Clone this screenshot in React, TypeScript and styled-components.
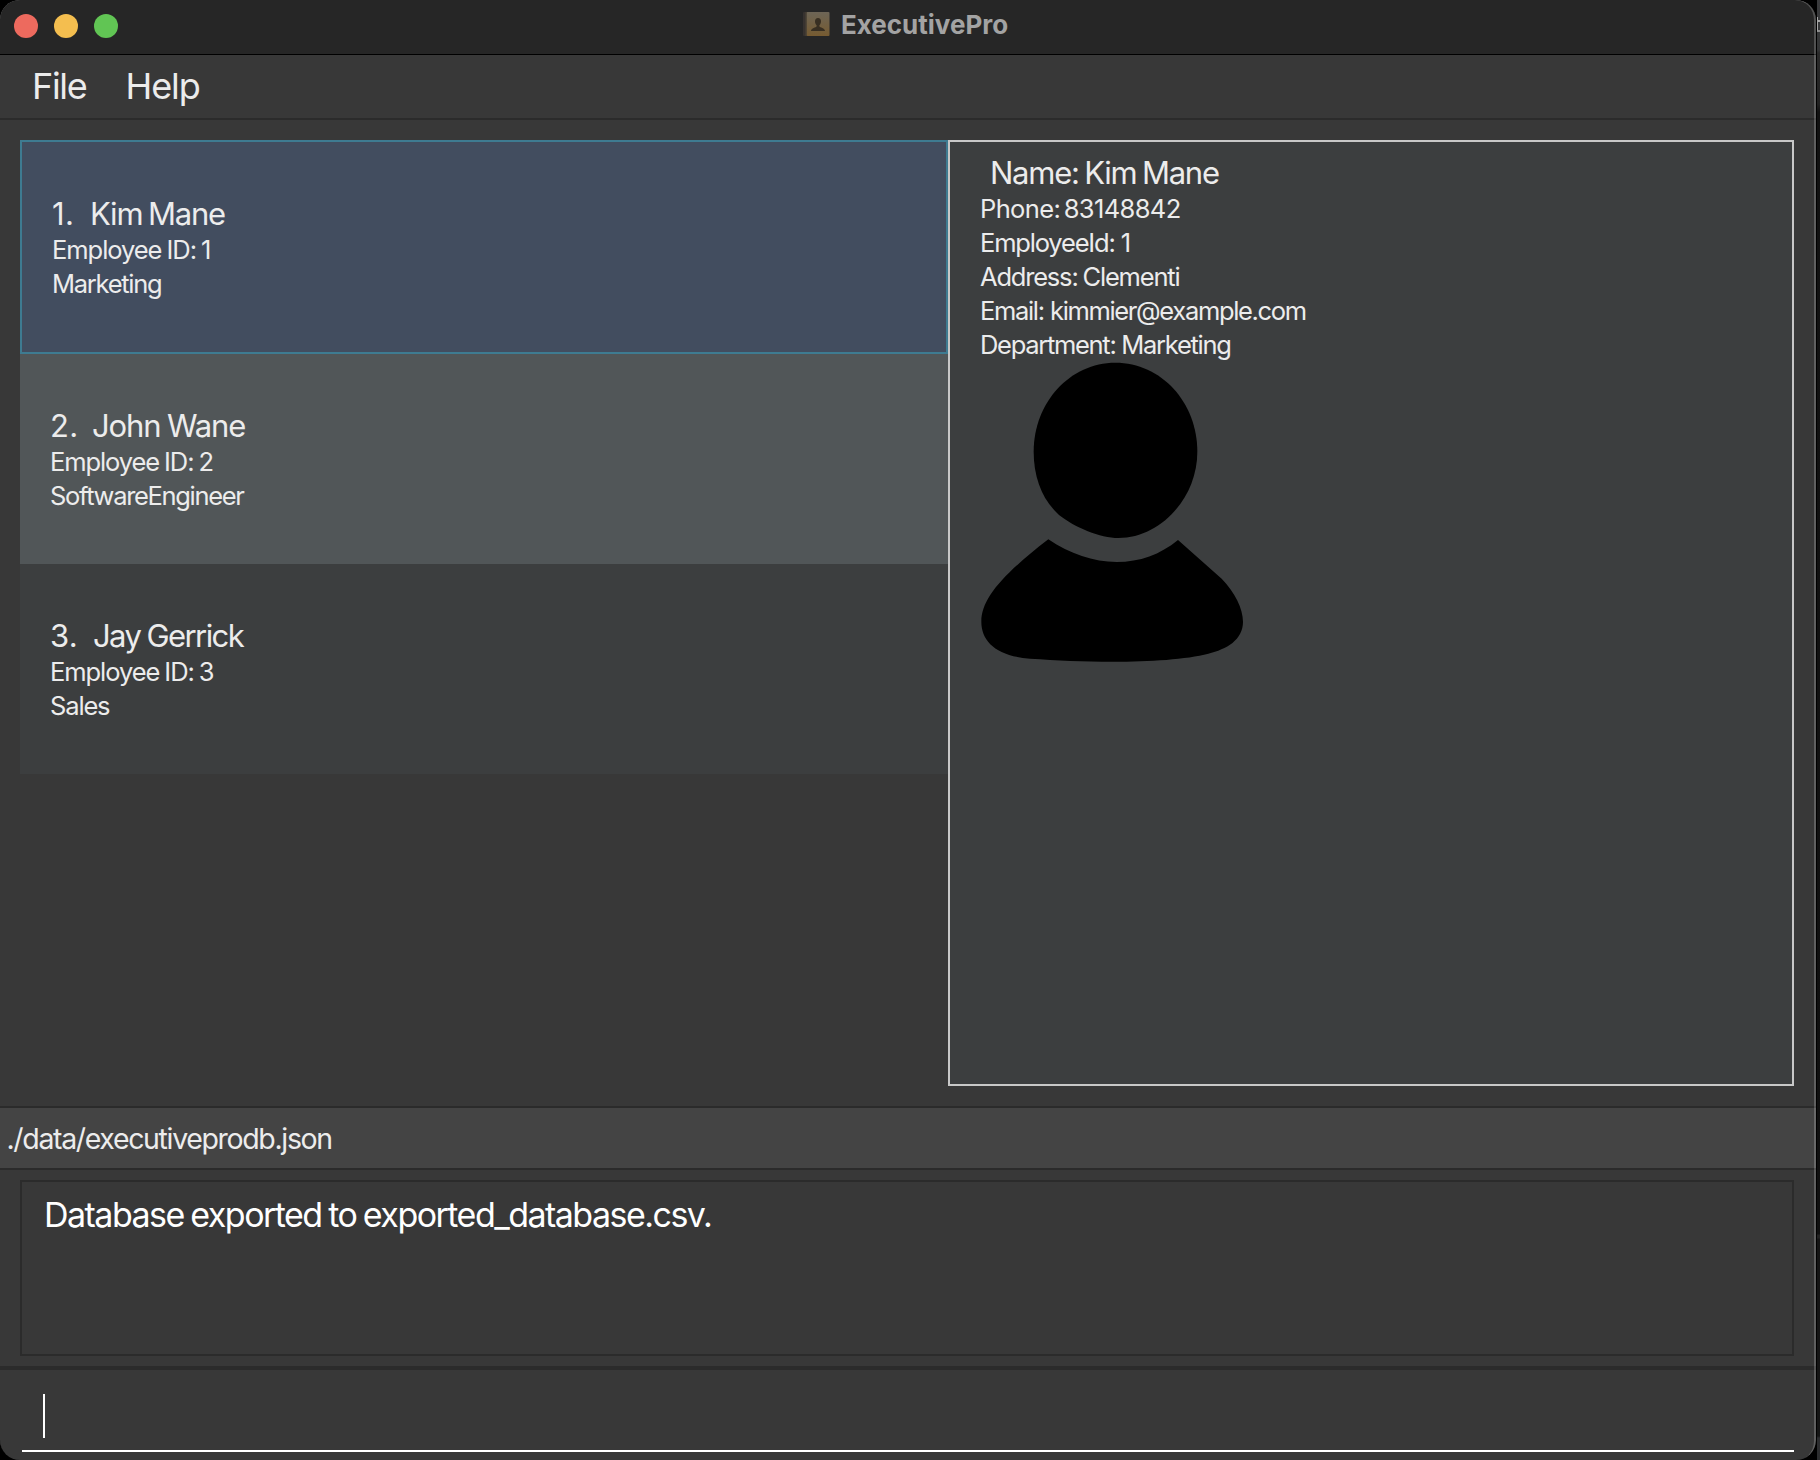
import React from "react";
import styled, { createGlobalStyle } from "styled-components";

const GlobalStyle = createGlobalStyle`
  * { box-sizing: border-box; }
  html, body { margin: 0; padding: 0; background: #000; }
  body { overflow: hidden; font-family: Inter, "Liberation Sans", sans-serif; }
`;

const Desktop = styled.div`
  display: flex;
  position: relative;
  width: 1820px;
  height: 1460px;
  overflow: hidden;
  background: #000;
`;

const Window = styled.main`
  display: flex;
  flex-direction: column;
  position: relative;
  flex: none;
  width: 1816px;
  height: 1460px;
  overflow: hidden;
  border-radius: 20px;
  background: #383838;
  color: #ececec;
`;

const WindowEdge = styled.div`
  position: absolute;
  inset: -1px 0 -2px -1px;
  border: 1px solid rgba(255, 255, 255, 0.28);
  border-right: 2px solid rgba(255, 255, 255, 0.2);
  border-radius: 21px;
  pointer-events: none;
`;

const Behind = styled.aside`
  display: flex;
  flex-direction: column;
  width: 3px;
  margin-left: 1px;
  padding-top: 17px;
  background: linear-gradient(
    #3a3b3d 0, #343536 50px, #2a2a2a 53px, #222 104px, #121212 112px,
    #101010 1234px, #222 1235px, #222 1238px, #151515 1239px, #151515 1436px, #2c2d2f 1438px
  );
`;

const BehindMark = styled.span`
  width: 3px;
  height: 15px;
  border-left: 1px solid #a5a5a5;
  border-bottom: 2px solid #8a8a8a;
  background: linear-gradient(transparent 3px, #a5a5a5 3px, #a5a5a5 5px, transparent 5px);
`;

const TitleBar = styled.header`
  display: flex;
  flex: none;
  position: relative;
  align-items: flex-start;
  justify-content: center;
  height: 55px;
  padding: 9px 5px 0 0;
  background: #262626;
  border-bottom: 1px solid #000;
`;

const Lights = styled.div`
  position: absolute;
  top: 14px;
  left: 14px;
  display: flex;
  gap: 16px;
`;

const Light = styled.span<{ $color: string }>`
  width: 24px;
  height: 24px;
  border-radius: 50%;
  background: ${(p) => p.$color};
`;

const Title = styled.h1`
  display: flex;
  gap: 10px;
  margin: 0;
  font-size: 26px;
  font-weight: 700;
  line-height: 31px;
  color: #a3a3a3;
`;

const BookIcon = styled.svg`
  width: 28px;
  height: 26px;
  margin-top: 2px;
`;

const MenuBar = styled.nav`
  display: flex;
  flex: none;
  height: 65px;
  padding: 9px 0 0 32px;
  border-bottom: 2px solid #2b2b2b;
`;

const MenuItem = styled.span<{ $width: number; $track: number }>`
  width: ${(p) => p.$width}px;
  font-size: 36px;
  line-height: 44px;
  letter-spacing: ${(p) => p.$track}px;
`;

const Content = styled.section`
  display: flex;
  flex: none;
  height: 986px;
  padding: 20px 22px 20px 20px;
`;

const List = styled.div`
  display: flex;
  flex-direction: column;
  width: 928px;
`;

const Card = styled.article<{ $bg: string; $selected?: boolean }>`
  display: flex;
  flex-direction: column;
  gap: 1px;
  height: ${(p) => (p.$selected ? 214 : 210)}px;
  padding: 53px 30px 0;
  background: ${(p) => p.$bg};
  border: ${(p) => (p.$selected ? "2px solid #3e7b91" : "0")};
`;

const Name = styled.div<{ $track: number; $word: number; $indent?: number }>`
  display: flex;
  padding-left: ${(p) => p.$indent ?? 0}px;
  font-size: 31px;
  line-height: 37px;
  letter-spacing: ${(p) => p.$track}px;
  word-spacing: ${(p) => p.$word}px;
  white-space: nowrap;
`;

const Index = styled.span<{ $width: number }>`
  width: ${(p) => p.$width}px;
  letter-spacing: 0.4px;
`;

const Field = styled.div<{ $track: number; $word?: number }>`
  font-size: 25.5px;
  line-height: 33px;
  letter-spacing: ${(p) => p.$track}px;
  word-spacing: ${(p) => p.$word ?? 0}px;
  white-space: nowrap;
`;

const Detail = styled.section`
  display: flex;
  flex-direction: column;
  gap: 1px;
  flex: 1;
  padding: 12px 30px;
  border: 2px solid #c8c8c8;
  background: #3c3e3f;
`;

const Avatar = styled.svg`
  display: block;
  width: 265px;
  height: 302px;
  margin-top: -1px;
`;

const StatusBar = styled.div`
  flex: none;
  height: 64px;
  padding: 13px 6.5px 0;
  border: solid #2b2b2b;
  border-width: 2px 0;
  background: #444;
  font-size: 28.5px;
  line-height: 35px;
  letter-spacing: -1.35px;
`;

const ResultArea = styled.section`
  flex: none;
  height: 200px;
  padding: 10px 22px 10px 20px;
  border-bottom: 4px solid #2b2b2b;
`;

const Result = styled.div`
  height: 176px;
  padding: 12px 22px;
  border: 2px solid #2b2b2b;
  color: #fff;
  font-size: 34px;
  line-height: 41px;
  letter-spacing: -1.53px;
  word-spacing: -1.5px;
`;

const CommandArea = styled.section`
  flex: 1;
  padding: 0 22px;
`;

const CommandInput = styled.div`
  height: 82px;
  padding: 24px 21px 0;
  border-bottom: 2px solid #fff;
`;

const Caret = styled.div`
  width: 2px;
  height: 44px;
  background: #fff;
`;

const employees = [
  { n: "1.", w: 38, name: "Kim Mane", nt: -1.2, nw: -2, id: "Employee ID: 1", it: -1.05, dept: "Marketing", dt: -1.28, bg: "#424d5f", selected: true },
  { n: "2.", w: 42, name: "John Wane", nt: -1.14, nw: -1, id: "Employee ID: 2", it: -1.1, dept: "SoftwareEngineer", dt: -1.33, bg: "#515658" },
  { n: "3.", w: 43, name: "Jay Gerrick", nt: -1.58, nw: -1, id: "Employee ID: 3", it: -1.07, dept: "Sales", dt: -1.15, bg: "#3c3e3f" },
];

const details: [string, number, number][] = [
  ["Phone: 83148842", -0.63, -3],
  ["EmployeeId: 1", -1.18, 0],
  ["Address: Clementi", -1.2, -1],
  ["Email: kimmier@example.com", -1.34, 0.5],
  ["Department: Marketing", -1.3, 0],
];

export default function App() {
  return (
    <>
      <GlobalStyle />
      <Desktop>
        <Window>
          <TitleBar>
            <Lights>
              <Light $color="#ed6a5e" />
              <Light $color="#f4be4f" />
              <Light $color="#61c554" />
            </Lights>
            <Title>
              <BookIcon viewBox="0 0 28 26">
                <defs>
                  <linearGradient id="cover" x1="0" y1="0" x2="0" y2="1">
                    <stop offset="0" stopColor="#6d6556" />
                    <stop offset="1" stopColor="#765b31" />
                  </linearGradient>
                </defs>
                <rect x="0" y="1" width="4" height="24" rx="1" fill="#37322f" />
                <rect x="3.500" y="1" width="23" height="24" rx="1" fill="url(#cover)" />
                <rect x="2.500" y="1" width="1.2" height="24" fill="#4e4537" />
                <path d="M15 7c-2 0-3 1.400-3 3.300 0 1.700.6 3 1.600 3.900v1.400c-.4 1-5.600 1.500-5.600 4.400h14c0-2.900-5.200-3.400-5.600-4.400v-1.400c1-.9 1.600-2.200 1.600-3.900C18 8.400 17 7 15 7z" fill="#382f22" />
              </BookIcon>
              ExecutivePro
            </Title>
          </TitleBar>
          <MenuBar>
            <MenuItem $width={93.5} $track={-1.33}>File</MenuItem>
            <MenuItem $width={93} $track={-1.1}>Help</MenuItem>
          </MenuBar>
          <Content>
            <List>
              {employees.map((e) => (
                <Card key={e.n} $bg={e.bg} $selected={e.selected}>
                  <Name $track={e.nt} $word={e.nw}>
                    <Index $width={e.w}>{e.n}</Index>
                    <span>{e.name}</span>
                  </Name>
                  <Field $track={e.it} $word={-1}>{e.id}</Field>
                  <Field $track={e.dt}>{e.dept}</Field>
                </Card>
              ))}
            </List>
            <Detail>
              <Name $track={-1.24} $word={-2} $indent={10}>Name: Kim Mane</Name>
              {details.map(([text, track, word]) => (
                <Field key={text} $track={track} $word={word}>{text}</Field>
              ))}
              <Avatar viewBox="60 33 795 906">
                <path d="M466 38C604 38 712 157 712 305C712 445 600 564 475 564C420 564 345 533 297 495C248 450 221 385 221 305C221 157 330 38 466 38Z" />
                <path d="M265 568C330 612 400 636 470 636C540 636 600 614 654 570L785 686C825 728 849 775 849 815C849 870 800 897 745 911C680 928 570 935 458 935C370 935 290 931 210 926C110 918 64 875 64 815C64 745 130 672 265 568Z" />
              </Avatar>
            </Detail>
          </Content>
          <StatusBar>./data/executiveprodb.json</StatusBar>
          <ResultArea>
            <Result>Database exported to exported_database.csv.</Result>
          </ResultArea>
          <CommandArea>
            <CommandInput>
              <Caret />
            </CommandInput>
          </CommandArea>
          <WindowEdge />
        </Window>
        <Behind>
          <BehindMark />
        </Behind>
      </Desktop>
    </>
  );
}
